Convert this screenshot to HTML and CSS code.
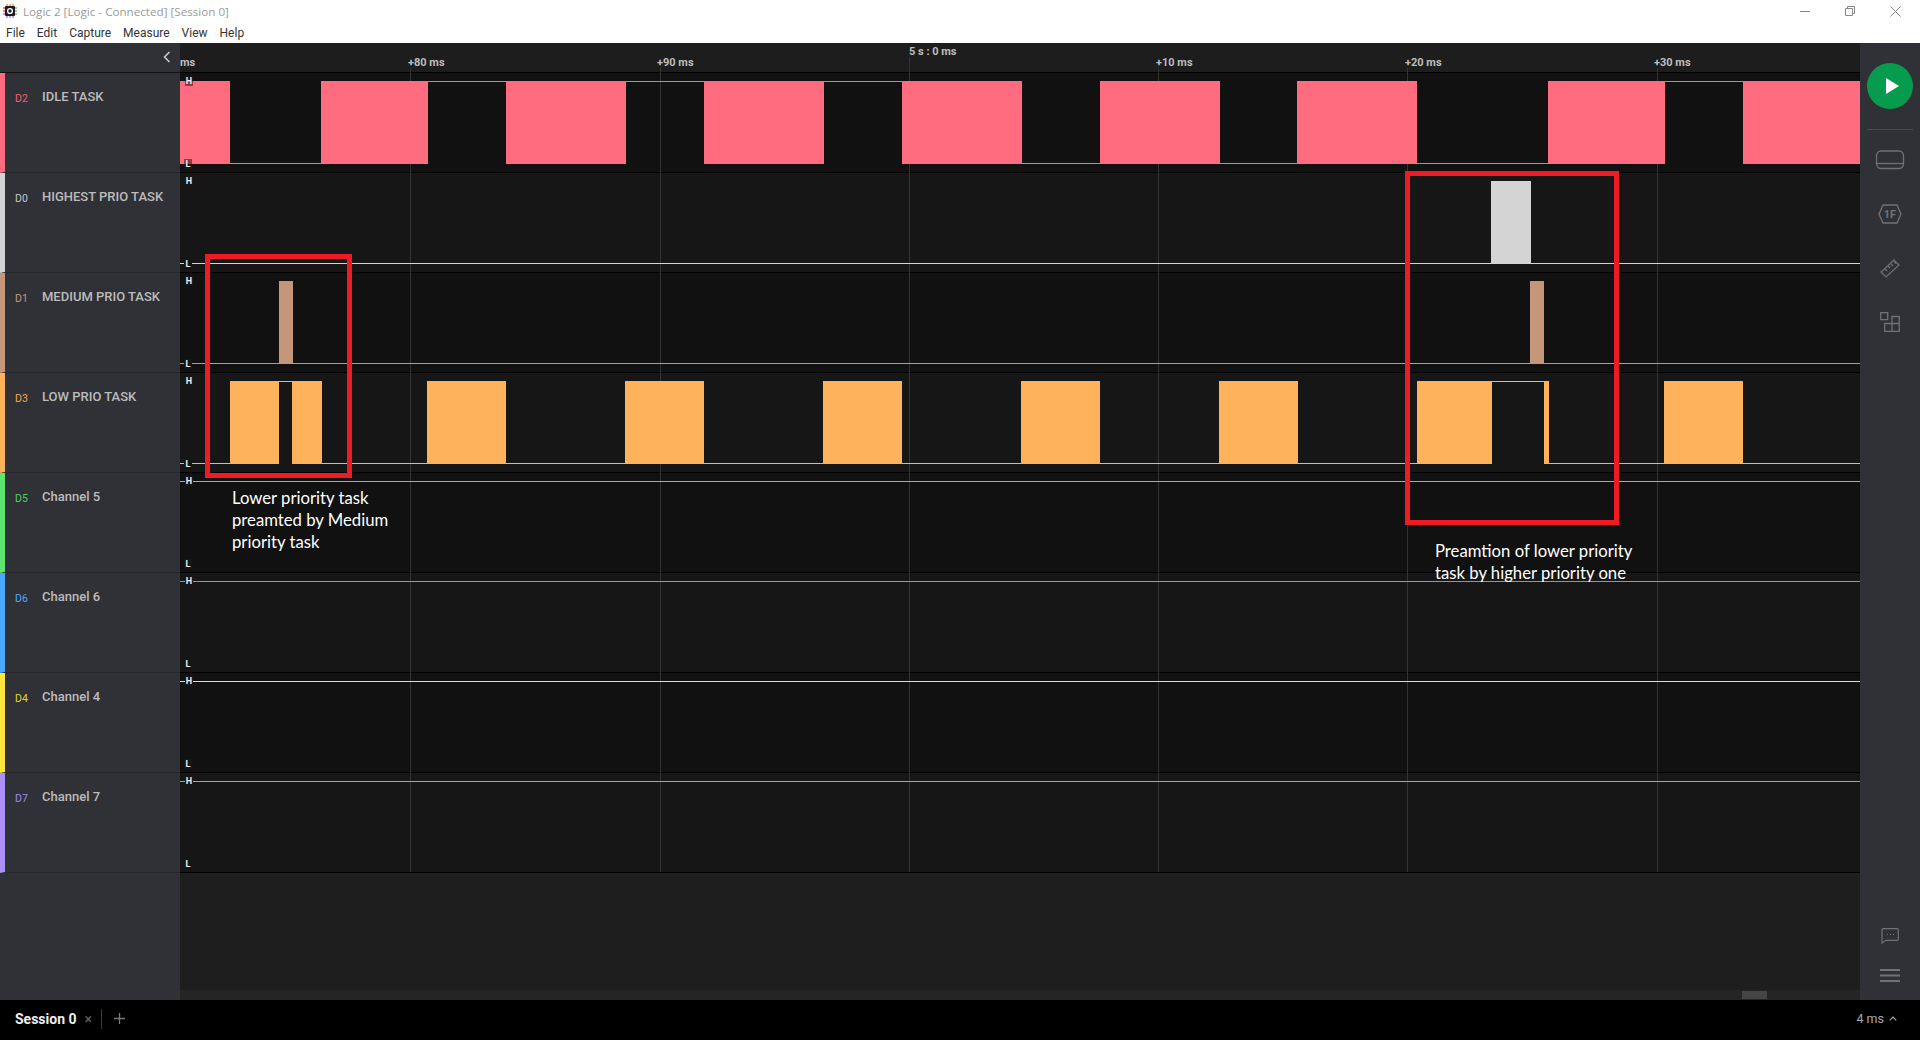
FILE: index.html
```html
<!DOCTYPE html>
<html lang="en">
<head>
    <meta charset="UTF-8">
    <title>Logic 2 [Logic - Connected] [Session 0]</title>
    <link rel="stylesheet" href="styles.css">
</head>
<body>
<div class="app">

    <!-- window title + menu -->
    <div class="titlebar">
        <div class="title_row">
            <svg class="logo" width="14" height="14" viewBox="0 0 14 14">
                <path d="M4 0v2M7 0v2M10 0v2" stroke="#f2a33a" stroke-width="1.5"/>
                <path d="M0 4h2M0 7h2M0 10h2" stroke="#e8607a" stroke-width="1.5"/>
                <path d="M12 4h2M12 7h2M12 10h2" stroke="#6fc46f" stroke-width="1.5"/>
                <path d="M4 12v2M7 12v2M10 12v2" stroke="#a98be8" stroke-width="1.5"/>
                <rect x="2" y="2" width="10" height="10" rx="1" fill="#1c1c22"/>
                <circle cx="7" cy="7" r="2.4" fill="none" stroke="#fff" stroke-width="1.4"/>
            </svg>
            <span class="title_text">Logic 2 [Logic - Connected] [Session 0]</span>
            <div class="win_btns">
                <svg width="10" height="10" viewBox="0 0 10 10"><path d="M0 5.5h10" stroke="#888"/></svg>
                <svg width="10" height="10" viewBox="0 0 10 10"><path d="M.5 2.5h7v7h-7zM2.5 2.5v-2h7v7h-2" fill="none" stroke="#888"/></svg>
                <svg width="11" height="11" viewBox="0 0 11 11"><path d="M.5.5l10 10M10.5.5l-10 10" stroke="#888"/></svg>
            </div>
        </div>
        <div class="menu">
            <span>File</span><span>Edit</span><span>Capture</span><span>Measure</span><span>View</span><span>Help</span>
        </div>
    </div>

    <div class="main">

        <!-- channel names -->
        <div class="side">
            <div class="side_head">
                <svg width="8" height="12" viewBox="0 0 8 12"><path d="M6.5 1L1.5 6l5 5" fill="none" stroke="#c8c8c8" stroke-width="1.6"/></svg>
            </div>
            <div class="chan c_red"><span class="tag">D2</span><span class="name">IDLE TASK</span></div>
            <div class="chan c_gray"><span class="tag">D0</span><span class="name">HIGHEST PRIO TASK</span></div>
            <div class="chan c_brown"><span class="tag">D1</span><span class="name">MEDIUM PRIO TASK</span></div>
            <div class="chan c_orange"><span class="tag">D3</span><span class="name">LOW PRIO TASK</span></div>
            <div class="chan c_green"><span class="tag">D5</span><span class="name">Channel 5</span></div>
            <div class="chan c_blue"><span class="tag">D6</span><span class="name">Channel 6</span></div>
            <div class="chan c_yellow"><span class="tag">D4</span><span class="name">Channel 4</span></div>
            <div class="chan c_purple"><span class="tag">D7</span><span class="name">Channel 7</span></div>
        </div>

        <!-- waveform area -->
        <div class="viewer">
            <div class="ruler">
                <span class="time t0">ms</span>
                <span class="time t1">+80 ms</span>
                <span class="time t2">+90 ms</span>
                <span class="time t3 center">5 s : 0 ms</span>
                <span class="time t4">+10 ms</span>
                <span class="time t5">+20 ms</span>
                <span class="time t6">+30 ms</span>
            </div>

            <div class="grid_line g1"></div>
            <div class="grid_line g2"></div>
            <div class="grid_line g3 tall"></div>
            <div class="grid_line g4"></div>
            <div class="grid_line g5"></div>
            <div class="grid_line g6"></div>

            <div class="row dark">
                <svg class="wave" width="1680" height="99" fill="#ff6b7f">
                    <rect x="0" y="8" width="50" height="83"/>
                    <rect x="141" y="8" width="107" height="83"/>
                    <rect x="326" y="8" width="120" height="83"/>
                    <rect x="524" y="8" width="120" height="83"/>
                    <rect x="722" y="8" width="120" height="83"/>
                    <rect x="920" y="8" width="120" height="83"/>
                    <rect x="1117" y="8" width="120" height="83"/>
                    <rect x="1368" y="8" width="117" height="83"/>
                    <rect x="1563" y="8" width="117" height="83"/>
                    <rect x="50" y="90" width="91" height="1"/>
                    <rect x="248" y="8" width="78" height="1"/>
                    <rect x="446" y="8" width="78" height="1"/>
                    <rect x="644" y="8" width="78" height="1"/>
                    <rect x="842" y="90" width="78" height="1"/>
                    <rect x="1040" y="90" width="77" height="1"/>
                    <rect x="1237" y="90" width="131" height="1"/>
                    <rect x="1485" y="8" width="78" height="1"/>
                </svg>
                <span class="lvl high tinted_h">H</span><span class="lvl low tinted_l">L</span>
            </div>

            <div class="row">
                <svg class="wave" width="1680" height="99" fill="#d4d4d4">
                    <rect x="0" y="90" width="1680" height="1"/>
                    <rect x="1311" y="8" width="40" height="83"/>
                </svg>
                <span class="lvl high">H</span><span class="lvl low">L</span>
            </div>

            <div class="row dark">
                <svg class="wave" width="1680" height="99" fill="#c6967b">
                    <rect x="0" y="90" width="1680" height="1"/>
                    <rect x="99" y="8" width="14" height="83"/>
                    <rect x="1350" y="8" width="14" height="83"/>
                </svg>
                <span class="lvl high">H</span><span class="lvl low">L</span>
            </div>

            <div class="row">
                <svg class="wave" width="1680" height="99" fill="#ffb25c">
                    <rect x="50" y="8" width="49" height="83"/>
                    <rect x="112" y="8" width="30" height="83"/>
                    <rect x="247" y="8" width="79" height="83"/>
                    <rect x="445" y="8" width="79" height="83"/>
                    <rect x="643" y="8" width="79" height="83"/>
                    <rect x="841" y="8" width="79" height="83"/>
                    <rect x="1039" y="8" width="79" height="83"/>
                    <rect x="1237" y="8" width="75" height="83"/>
                    <rect x="1364" y="8" width="5" height="83"/>
                    <rect x="1484" y="8" width="79" height="83"/>
                    <rect x="99" y="8" width="13" height="1"/>
                    <rect x="1312" y="8" width="52" height="1"/>
                    <rect x="0" y="90" width="50" height="1"/>
                    <rect x="142" y="90" width="105" height="1"/>
                    <rect x="326" y="90" width="119" height="1"/>
                    <rect x="524" y="90" width="119" height="1"/>
                    <rect x="722" y="90" width="119" height="1"/>
                    <rect x="920" y="90" width="119" height="1"/>
                    <rect x="1118" y="90" width="119" height="1"/>
                    <rect x="1369" y="90" width="115" height="1"/>
                    <rect x="1563" y="90" width="117" height="1"/>
                </svg>
                <span class="lvl high">H</span><span class="lvl low">L</span>
            </div>

            <div class="row dark">
                <svg class="wave" width="1680" height="99" fill="#5fdc6e"><rect x="0" y="8" width="1680" height="1"/></svg>
                <span class="lvl high">H</span><span class="lvl low">L</span>
            </div>
            <div class="row">
                <svg class="wave" width="1680" height="99" fill="#4ba8ff"><rect x="0" y="8" width="1680" height="1"/></svg>
                <span class="lvl high">H</span><span class="lvl low">L</span>
            </div>
            <div class="row dark">
                <svg class="wave" width="1680" height="99" fill="#fde73e"><rect x="0" y="8" width="1680" height="1"/></svg>
                <span class="lvl high">H</span><span class="lvl low">L</span>
            </div>
            <div class="row">
                <svg class="wave" width="1680" height="99" fill="#ab8ffb"><rect x="0" y="8" width="1680" height="1"/></svg>
                <span class="lvl high">H</span><span class="lvl low">L</span>
            </div>

            <div class="empty"></div>
            <div class="scroll"><div class="thumb"></div></div>

            <!-- annotations drawn on top of the capture -->
            <div class="red_box box1"></div>
            <div class="red_box box2"></div>
            <div class="note note1">Lower priority task<br>preamted by Medium<br>priority task</div>
            <div class="note note2">Preamtion of lower priority<br>task by higher priority one</div>
        </div>

        <!-- right toolbar -->
        <div class="tools">
            <div class="play">
                <svg width="16" height="18" viewBox="0 0 16 18"><path d="M2 1l13 8-13 8z" fill="#fff"/></svg>
            </div>
            <div class="tools_line"></div>
            <div class="tool_icons">
                <svg width="30" height="20" viewBox="0 0 30 20" fill="none" stroke="#707176" stroke-width="1.3">
                    <path d="M6 1h18c2.500 0 4.500 2 4.500 5v7c0 3-1.500 5.500-4.500 5.500H6C3 18.500 1.500 16 1.500 13V6C1.500 3 3.500 1 6 1z"/>
                    <path d="M1.500 13.500h27"/>
                </svg>
                <svg width="24" height="20" viewBox="0 0 24 20" fill="none" stroke="#707176" stroke-width="1.3">
                    <path d="M5 1h14l4 9-4 9H5L1 10z"/>
                    <text x="12" y="14" class="hex_text">1F</text>
                </svg>
                <svg width="20" height="20" viewBox="0 0 20 20" fill="none" stroke="#707176" stroke-width="1.2">
                    <path d="M1 14L14 2l5 5L6 19z"/>
                    <path d="M5 11l2 2M8 8l2 2M11 6l2 2M14 3.500l2 2"/>
                </svg>
                <svg width="20" height="20" viewBox="0 0 20 20" fill="none" stroke="#707176" stroke-width="1.3">
                    <path d="M.7.700h7v7h-7zM4.700 11.500h14.500v8H4.700zM12 4.500h7.200v15H12z"/>
                </svg>
            </div>
            <div class="tool_bottom">
                <svg width="18" height="16" viewBox="0 0 18 16" fill="none" stroke="#707176" stroke-width="1.2">
                    <path d="M2 .700h14c.8 0 1.300.5 1.300 1.300v9c0 .8-.5 1.300-1.300 1.300H5L1 15V2C1 1.200 1.200.700 2 .700z"/>
                    <path d="M6 6.500h1M9 6.500h1M12 6.500h1" stroke-width="1"/>
                </svg>
                <svg width="20" height="13" viewBox="0 0 20 13" fill="#707176">
                    <rect y="0" width="20" height="2"/><rect y="5.500" width="20" height="2"/><rect y="11" width="20" height="2"/>
                </svg>
            </div>
        </div>
    </div>

    <!-- session tabs -->
    <div class="bottom">
        <span class="session">Session 0</span>
        <span class="tab_x">×</span>
        <span class="tab_sep"></span>
        <svg class="tab_plus" width="11" height="11" viewBox="0 0 11 11"><path d="M5.500 0v11M0 5.500h11" stroke="#77787d" stroke-width="1.300"/></svg>
        <span class="span_ms">4 ms</span>
        <svg width="8" height="5" viewBox="0 0 8 5"><path d="M.7 4.300L4 1l3.300 3.300" fill="none" stroke="#aaa" stroke-width="1.200"/></svg>
    </div>
</div>
</body>
</html>
```

FILE: styles.css
```css
* {
    box-sizing: border-box;
}

body {
    margin: 0;
    font-family: "Roboto", "Liberation Sans", sans-serif;
    overflow: hidden;
}

.app {
    display: flex;
    flex-direction: column;
    height: 100vh;
}

/* title bar */
.titlebar {
    height: 43px;
    background-color: #fff;
}

.title_row {
    display: flex;
    align-items: center;
    height: 22px;
    padding-left: 3px;
}

.logo {
    margin-right: 6px;
}

.title_text {
    font-family: "Open Sans", sans-serif;
    font-size: 11.65px;
    color: #9a9a9a;
}

.win_btns {
    display: flex;
    align-items: center;
    gap: 35px;
    margin-left: auto;
    margin-right: 19px;
}

.menu {
    display: flex;
    gap: 12px;
    padding-left: 6px;
    padding-top: 1px;
    font-size: 12px;
    line-height: 21px;
    color: #333;
}

/* main area */
.main {
    flex: 1;
    display: flex;
    min-height: 0;
}

.side {
    width: 180px;
    background-color: #303136;
}

.side_head {
    display: flex;
    justify-content: flex-end;
    height: 30px;
    padding: 8px 9px 0 0;
    border-bottom: 1px solid #111;
}

.chan {
    display: flex;
    height: 100px;
    padding: 16px 0 0 10px;
    border-left: 5px solid;
    border-bottom: 1px solid #26272b;
}

.tag {
    width: 27px;
    padding-top: 3px;
    font-size: 10.5px;
}

.name {
    font-size: 13px;
    font-weight: 500;
    color: #bcbcbc;
}

.c_red { border-left-color: #ff6b7f; }
.c_red .tag { color: #f0606f; }
.c_gray { border-left-color: #d4d4d4; }
.c_gray .tag { color: #c4c4c4; }
.c_brown { border-left-color: #c6967b; }
.c_brown .tag { color: #c6967b; }
.c_orange { border-left-color: #ffb25c; }
.c_orange .tag { color: #f4a64e; }
.c_green { border-left-color: #5ee56f; }
.c_green .tag { color: #4fd060; }
.c_blue { border-left-color: #4ba8ff; }
.c_blue .tag { color: #4ba8ff; }
.c_yellow { border-left-color: #fde73e; }
.c_yellow .tag { color: #e6d22e; }
.c_purple { border-left-color: #ab8ffb; }
.c_purple .tag { color: #a287f0; }

/* waveforms */
.viewer {
    position: relative;
    flex: 1;
    display: flex;
    flex-direction: column;
    background-color: #1e1e1e;
}

.ruler {
    position: relative;
    height: 30px;
    flex-shrink: 0;
    background-color: #1d1d1d;
    border-bottom: 1px solid #000;
}

.time {
    position: absolute;
    top: 13px;
    font-size: 11px;
    font-weight: 700;
    color: #bdbdbd;
    white-space: nowrap;
}

.t0 { left: 0; }
.t1 { left: 228px; }
.t2 { left: 477px; }
.t3 { left: 729px; top: 2px; }
.t4 { left: 976px; }
.t5 { left: 1225px; }
.t6 { left: 1474px; }

.grid_line {
    position: absolute;
    z-index: 1;
    top: 25px;
    height: 804px;
    width: 1px;
    background-color: #333;
}

.grid_line.tall {
    top: 14px;
    height: 815px;
}

.g1 { left: 230px; }
.g2 { left: 480px; }
.g3 { left: 729px; }
.g4 { left: 978px; }
.g5 { left: 1227px; }
.g6 { left: 1477px; }

.row {
    position: relative;
    flex-shrink: 0;
    height: 100px;
    background-color: #161616;
    border-bottom: 1px solid #000;
}

.row.dark {
    background-color: #111;
}

.wave {
    position: relative;
    z-index: 2;
    display: block;
}

.lvl {
    position: absolute;
    z-index: 3;
    left: 5px;
    width: 8px;
    height: 10px;
    font-size: 9px;
    font-weight: 700;
    line-height: 10px;
    text-align: center;
    color: #eee;
    background-color: #161616;
}

.high { top: 3px; }
.low { top: 86px; left: 4px; }

.tinted_h,
.tinted_l {
    background-color: rgba(40, 20, 24, 0.55);
}

.empty {
    flex: 1;
}

.scroll {
    height: 10px;
    flex-shrink: 0;
    padding-top: 1px;
    background-color: #252525;
}

.thumb {
    width: 25px;
    height: 8px;
    margin-left: 1562px;
    background-color: #454545;
}

.red_box {
    position: absolute;
    z-index: 4;
    border: 5px solid #ed1c24;
}

.box1 {
    left: 25px;
    top: 211px;
    width: 147px;
    height: 224px;
}

.box2 {
    left: 1225px;
    top: 128px;
    width: 214px;
    height: 354px;
}

.note {
    position: absolute;
    z-index: 4;
    font-family: "Lato", sans-serif;
    font-size: 16.7px;
    line-height: 22px;
    color: #fff;
}

.note1 {
    left: 52px;
    top: 444px;
}

.note2 {
    left: 1255px;
    top: 497px;
}

/* right toolbar */
.tools {
    width: 60px;
    display: flex;
    flex-direction: column;
    align-items: center;
    padding-top: 20px;
    background-color: #303136;
}

.play {
    display: flex;
    align-items: center;
    justify-content: center;
    width: 46px;
    height: 46px;
    padding-left: 3px;
    border-radius: 50%;
    background-color: #079b4e;
}

.tools_line {
    width: 46px;
    height: 1px;
    margin-top: 20px;
    background-color: #4a4b50;
}

.tool_icons {
    display: flex;
    flex-direction: column;
    align-items: center;
    gap: 34px;
    margin-top: 20px;
}

.hex_text {
    font-family: "Roboto", sans-serif;
    font-size: 11px;
    font-weight: 700;
    text-anchor: middle;
    fill: #707176;
    stroke: none;
}

.tool_bottom {
    display: flex;
    flex-direction: column;
    align-items: center;
    gap: 25px;
    margin-top: auto;
    padding-bottom: 18px;
}

/* bottom bar */
.bottom {
    display: flex;
    align-items: center;
    height: 40px;
    padding: 0 23px 3px 15px;
    background-color: #000;
}

.session {
    font-size: 14px;
    font-weight: 700;
    color: #eee;
}

.tab_x {
    margin-left: 8px;
    font-size: 14px;
    color: #666;
}

.tab_sep {
    width: 1px;
    height: 20px;
    margin-left: 9px;
    background-color: #3a3a3a;
}

.tab_plus {
    margin-left: 12px;
}

.span_ms {
    margin-left: auto;
    margin-right: 5px;
    font-size: 12.5px;
    color: #aaa;
}
```
